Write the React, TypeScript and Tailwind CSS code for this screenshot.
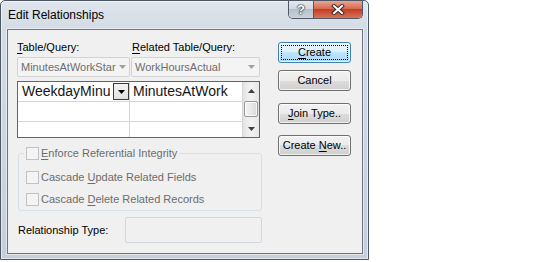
import type { ReactNode } from "react";

const ui = "font-['Liberation_Sans',Arial,sans-serif]";

function Key({ children }: { children: ReactNode }) {
  return <span className="underline underline-offset-[2px]">{children}</span>;
}

function Tri({ up, color }: { up?: boolean; color: string }) {
  return (
    <svg width="7" height="4" viewBox="0 0 7 4" className="shrink-0">
      <path d={up ? "M0 4 L3.5 0 L7 4 Z" : "M0 0 L7 0 L3.5 4 Z"} fill={color} />
    </svg>
  );
}

function Combo({ width, text }: { width: string; text: string }) {
  return (
    <div className={`flex h-[20px] items-center rounded-[2px] border border-[#d3d3d3] bg-[#f4f4f4] pl-[3px] text-[#6d6d6d] ${width}`}>
      <span className="flex-1 whitespace-nowrap">{text}</span>
      <div className="flex w-[15px] justify-center">
        <Tri color="#a0a0a0" />
      </div>
    </div>
  );
}

function Check({ children }: { children: ReactNode }) {
  return (
    <div className="flex items-center gap-[2px] text-[#6d6d6d]">
      <div className="h-[13px] w-[13px] border border-[#c2c2c2] bg-[#f4f4f4]" />
      <span>{children}</span>
    </div>
  );
}

function Btn({ children, primary }: { children: ReactNode; primary?: boolean }) {
  return (
    <button
      className={`flex h-[21px] w-[73px] items-center justify-center rounded-[3px] border text-[11px] text-black shadow-[inset_0_0_0_1px_rgba(255,255,255,0.75)] ${
        primary
          ? "border-[#3c7fb1] bg-[linear-gradient(#eaf6fd,#d9f0fc_50%,#bee6fd_50%,#a7d9f5)] outline-1 outline-offset-[-4px] outline-black outline-dotted"
          : "border-[#707070] bg-[linear-gradient(#f2f2f2,#ebebeb_50%,#dddddd_50%,#cfcfcf)]"
      }`}
    >
      <span>{children}</span>
    </button>
  );
}

function Scrollbar() {
  return (
    <div className="flex w-[17px] flex-col border-l border-[#d5d5d5] bg-[linear-gradient(90deg,#e3e3e3,#f0f0f0_40%,#f0f0f0_60%,#e6e6e6)]">
      <div className="flex h-[17px] items-center justify-center">
        <Tri up color="#404040" />
      </div>
      <div className="mx-[1px] mt-[2px] h-[16px] rounded-[2px] border border-[#979797] bg-[linear-gradient(90deg,#f3f3f3,#e8e8e8_50%,#d9d9d9)] shadow-[inset_0_0_0_1px_rgba(255,255,255,0.8)]" />
      <div className="flex-1" />
      <div className="flex h-[17px] items-center justify-center">
        <Tri color="#404040" />
      </div>
    </div>
  );
}

function Grid() {
  return (
    <div className="mt-[4px] flex h-[57px] w-[243px] border border-[#646464] bg-white text-[14px] text-[#151515]">
      <div className="flex flex-1 flex-col">
        <div className="flex h-[20px] border-b border-[#d5d5d5]">
          <div className="flex w-[112px] items-center border-r border-[#d5d5d5]">
            <span className="flex-1 whitespace-nowrap pl-[4px]">WeekdayMinu</span>
            <div className="flex h-[17px] w-[16px] items-center justify-center border border-[#3a3a3a] bg-[linear-gradient(#f4f4f4,#e0e0e0)]">
              <Tri color="#000" />
            </div>
          </div>
          <div className="flex flex-1 items-center whitespace-nowrap pl-[3px]">MinutesAtWork</div>
        </div>
        <div className="flex h-[20px] border-b border-[#d5d5d5]">
          <div className="w-[112px] border-r border-[#d5d5d5]" />
          <div className="flex-1" />
        </div>
        <div className="flex flex-1">
          <div className="w-[112px] border-r border-[#d5d5d5]" />
          <div className="flex-1" />
        </div>
      </div>
      <Scrollbar />
    </div>
  );
}

export default function App() {
  return (
    <div className={`h-[262px] w-[542px] bg-white text-[11px] ${ui}`}>
      <div className="flex h-[260px] w-[369px] flex-col rounded-t-[5px] border border-[#4d5762] bg-[linear-gradient(#dfe6ee,#d3dbe4_28px,#c6cfd9)] pb-[5px] pl-[6px] pr-[5px] shadow-[inset_0_0_0_1px_rgba(255,255,255,0.55)]">
        {/* title bar */}
        <div className="flex h-[28px] items-start justify-between">
          <span className="self-center pl-[1px] text-[12px] leading-[15px] text-black">Edit Relationships</span>
          <div className="flex h-[18px] overflow-hidden rounded-b-[5px] border border-t-0 border-[#4f5a66]">
            <div className="flex w-[25px] items-center justify-center border-r border-[#4f5a66] bg-[linear-gradient(#e6eaef,#cfd6de_50%,#b6c0cb_50%,#cad3dc)] text-[13px] font-bold leading-none text-white [text-shadow:0_0_1px_#222,0_0_1px_#222,0_0_2px_#333]">
              ?
            </div>
            <div className="flex w-[48px] items-center justify-center bg-[linear-gradient(#eaa493,#d7634a_50%,#c23d22_50%,#d8735a)]">
              <svg width="14" height="11" viewBox="0 0 14 11">
                <path d="M3 2 L11 9 M11 2 L3 9" stroke="#3a2a28" strokeWidth="4" strokeLinecap="square" />
                <path d="M3 2 L11 9 M11 2 L3 9" stroke="#fff" strokeWidth="2" strokeLinecap="square" />
              </svg>
            </div>
          </div>
        </div>

        {/* client area */}
        <div className="flex flex-1 border border-[#6a7580] bg-[#f0f0f0] text-black shadow-[0_0_0_1px_rgba(255,255,255,0.5)]">
          <div className="flex w-[254px] flex-col pl-[9px] pt-[10px]">
            <div className="flex h-[15px] gap-[1px] leading-[15px]">
              <span className="w-[113px]">
                <Key>T</Key>able/Query:
              </span>
              <span className="pl-[1px]">
                <Key>R</Key>elated Table/Query:
              </span>
            </div>
            <div className="mt-[2px] flex gap-[1px]">
              <Combo width="w-[113px]" text="MinutesAtWorkStar" />
              <Combo width="w-[129px]" text="WorkHoursActual" />
            </div>
            <Grid />
            <fieldset className="ml-[1px] mt-[8px] w-[244px] rounded-[3px] border border-[#d5dfe5] pl-[5px]">
              <legend className="flex h-[14px] items-center px-[2px]">
                <Check>
                  <Key>E</Key>nforce Referential Integrity
                </Check>
              </legend>
              <div className="mt-[6px] ml-[2px] flex flex-col">
                <div className="flex h-[22px] items-center">
                  <Check>
                    Cascade <Key>U</Key>pdate Related Fields
                  </Check>
                </div>
                <div className="flex h-[22px] items-center">
                  <Check>
                    Cascade <Key>D</Key>elete Related Records
                  </Check>
                </div>
              </div>
            </fieldset>
            <div className="mt-[6px] flex h-[26px] items-center">
              <span className="w-[108px] pl-[1px]">Relationship Type:</span>
              <div className="h-[26px] w-[137px] rounded-[2px] border border-[#d3d7db] bg-[#f0f0f0]" />
            </div>
          </div>

          <div className="ml-[16px] flex flex-col pt-[12px]">
            <Btn primary>
              <Key>C</Key>reate
            </Btn>
            <div className="mt-[7px]">
              <Btn>Cancel</Btn>
            </div>
            <div className="mt-[12px]">
              <Btn>
                <Key>J</Key>oin Type..
              </Btn>
            </div>
            <div className="mt-[11px]">
              <Btn>
                Create <Key>N</Key>ew..
              </Btn>
            </div>
          </div>
        </div>
      </div>
    </div>
  );
}
